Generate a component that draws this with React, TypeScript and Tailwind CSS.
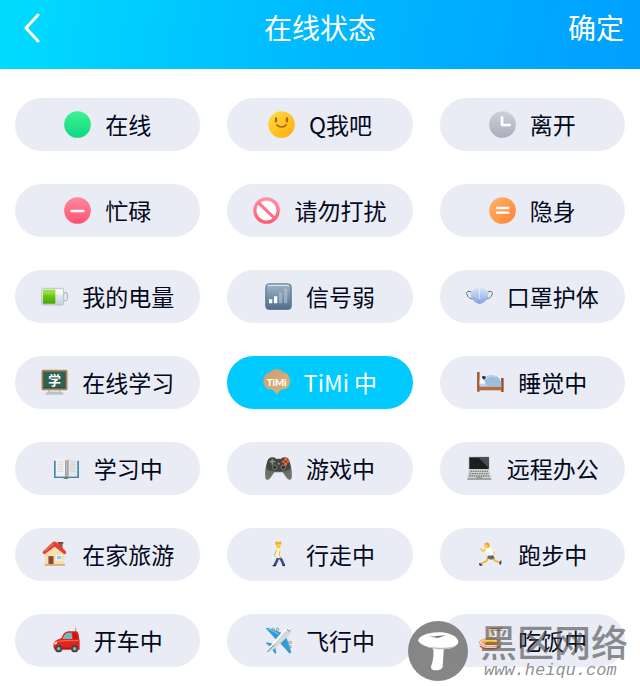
import { useState, type ReactNode } from 'react'
import { clsx } from 'clsx'

function Icon({ children }: { children: ReactNode }) {
  return (
    <svg viewBox="0 0 81 81" className="size-[27px] shrink-0" aria-hidden="true">
      {children}
    </svg>
  )
}

function Gradient({ id, from, to, diagonal }: { id: string; from: string; to: string; diagonal?: boolean }) {
  return (
    <linearGradient id={id} x1="0" y1="0" x2={diagonal ? '1' : '0'} y2="1">
      <stop offset="0" stopColor={from} />
      <stop offset="1" stopColor={to} />
    </linearGradient>
  )
}

function OnlineIcon() {
  return (
    <Icon>
      <Gradient id="online" from="#3df28f" to="#0fd782" />
      <circle cx="40.5" cy="40.5" r="40" fill="url(#online)" />
    </Icon>
  )
}

function SmileIcon() {
  return (
    <Icon>
      <Gradient id="smile" from="#ffdf42" to="#ffab0c" diagonal />
      <circle cx="40.5" cy="40.5" r="40" fill="url(#smile)" />
      <g fill="none" stroke="#a8641a" strokeWidth="5" strokeLinecap="round">
        <path d="M24 22v9M57 22v9" strokeWidth="7" />
        <path d="M27 42c6 8 21 8 27 0" />
      </g>
    </Icon>
  )
}

function AwayIcon() {
  return (
    <Icon>
      <Gradient id="away" from="#cfd0da" to="#abacba" />
      <circle cx="40.5" cy="40.5" r="40" fill="url(#away)" />
      <path d="M39 19v23h23" fill="none" stroke="#fff" strokeWidth="8" strokeLinecap="round" strokeLinejoin="round" />
    </Icon>
  )
}

function BusyIcon() {
  return (
    <Icon>
      <Gradient id="busy" from="#ff899d" to="#ff5372" />
      <circle cx="40.5" cy="40.5" r="40" fill="url(#busy)" />
      <path d="M23 42h35" stroke="#fff" strokeWidth="8" strokeLinecap="round" />
    </Icon>
  )
}

function DoNotDisturbIcon() {
  return (
    <Icon>
      <Gradient id="dnd" from="#ff8fa2" to="#ff5b78" />
      <circle cx="40.5" cy="40.5" r="35" fill="#fff" stroke="url(#dnd)" strokeWidth="10" />
      <path d="M16 17l49 47" stroke="#ff708a" strokeWidth="9" />
    </Icon>
  )
}

function InvisibleIcon() {
  return (
    <Icon>
      <Gradient id="invisible" from="#ffb469" to="#ff8136" diagonal />
      <circle cx="40.5" cy="40.5" r="40" fill="url(#invisible)" />
      <path d="M24 33h34M24 47h34" stroke="#fff" strokeWidth="7" strokeLinecap="round" />
    </Icon>
  )
}

function BatteryIcon() {
  return (
    <Icon>
      <Gradient id="battery" from="#8fe02c" to="#43a505" />
      <Gradient id="shell" from="#f7fafb" to="#c5d0d6" />
      <rect x="67" y="29" width="12" height="24" rx="4" fill="#e4eaed" stroke="#a7b1b8" strokeWidth="3" />
      <rect x="2" y="16" width="66" height="50" rx="5" fill="url(#shell)" stroke="#b9c4ca" strokeWidth="3" />
      <rect x="6" y="20" width="37" height="42" fill="url(#battery)" />
      <path d="M6 22h37v13H6z" fill="#b4ef68" opacity=".35" />
      <path d="M44 21h21v14H44z" fill="#fff" opacity=".6" />
    </Icon>
  )
}

function SignalIcon() {
  return (
    <Icon>
      <Gradient id="signal" from="#a3b9cb" to="#4a6b87" />
      <rect x="1" y="1" width="79" height="79" rx="11" fill="url(#signal)" />
      <rect x="3" y="3" width="75" height="75" rx="10" fill="none" stroke="#5a7790" strokeWidth="3" />
      <path d="M9 7h62" stroke="#d5e3ed" strokeWidth="4" strokeLinecap="round" />
      <path d="M12 49h10v12H12zM27 40h10v21H27z" fill="#fff" />
      <path d="M42 28h10v33H42zM57 17h10v44H57z" fill="#b6c8d6" opacity=".6" />
    </Icon>
  )
}

function MaskIcon() {
  return (
    <Icon>
      <Gradient id="mask" from="#e5effd" to="#7f9fdc" />
      <path d="M16 27C5 22 0 27 3 35c3 8 9 12 17 13M65 27c11-5 16 0 13 8-3 8-9 12-17 13" fill="none" stroke="#66686e" strokeWidth="3" />
      <path d="M40 8c3 0 25 16 27 22 1 7-2 17-6 21-4 5-13 12-20 12s-16-7-20-12c-4-4-8-14-7-21C15 24 37 8 40 8z" fill="url(#mask)" />
      <path d="M40 9v38" stroke="#f5f8ff" strokeWidth="2" />
      <path d="M15 32l25 16 25-16" fill="none" stroke="#dce8fb" strokeWidth="2" opacity=".5" />
    </Icon>
  )
}

function BlackboardIcon() {
  return (
    <Icon>
      <path d="M26 62l-4 8M54 62l4 8M15 75c0-7 51-7 51 0z" fill="none" stroke="#b9c0c6" strokeWidth="4" strokeLinejoin="round" />
      <rect x="4" y="5" width="73" height="56" rx="2" fill="#2e6353" stroke="#b58254" strokeWidth="5" />
      <path d="M7 56h67" stroke="#244e43" strokeWidth="3" />
      <text x="41" y="47" textAnchor="middle" fontSize="38" fontWeight="700" fill="#fff">
        学
      </text>
    </Icon>
  )
}

function TimiIcon() {
  return (
    <Icon>
      <Gradient id="timi" from="#c9a06c" to="#dcb27e" diagonal />
      <path d="M41 0c7 0 16 5 19 10 12 0 21 12 21 26 0 15-8 24-20 25-9 1-15 7-20 16-5-9-11-15-20-16C9 60 1 51 1 37c0-15 9-27 21-27C25 5 34 0 41 0z" fill="url(#timi)" />
      <text x="41" y="50" textAnchor="middle" fontSize="29" fontWeight="900" fill="#fff" className="font-['Lato','Noto_Sans_CJK_SC',sans-serif]">
        TiMi
      </text>
    </Icon>
  )
}

function BedIcon() {
  return (
    <Icon>
      <path d="M1 9h7v59H1zM72 27h8v42h-8z" fill="#a8623c" />
      <path d="M5 51h70v13H5z" fill="#b76b42" />
      <path d="M8 41h64v12H8z" fill="#bdd3e9" />
      <path d="M8 30c7-5 14-4 18 2l-3 12H8z" fill="#f5f8fb" />
      <path d="M16 22c6-3 13 0 12 7l-7 3c-5-1-7-6-5-10z" fill="#333638" />
      <path d="M22 36c0-20 33-22 44-8l7 13v12H31c-2-6-5-10-9-17z" fill="#9dbddd" />
      <path d="M26 31c8-11 21-13 31-5" fill="none" stroke="#c8dff2" strokeWidth="3" />
      <path d="M2 10v57M77 28v40" stroke="#824326" strokeWidth="2" />
    </Icon>
  )
}

function BookIcon() {
  return (
    <Icon>
      <path d="M3 17h9v46h57V17h9v52H48l-5 3h-8l-5-3H3z" fill="#3d86ad" />
      <path d="M7 64h28l5 4 5-4h28" fill="none" stroke="#d1d2d2" strokeWidth="3" />
      <path d="M8 13c13-5 25-3 32 3v50c-7-6-19-6-32-3z" fill="#f2f2f2" />
      <path d="M73 13c-13-5-25-3-32 3v50c7-6 19-6 32-3z" fill="#e6e6e6" />
      <path d="M36 14l4 3v49l-4-3zM41 17l6-4v48l-6 5z" fill="#a2a2a2" />
      <path d="M14 21h17M14 28h18M14 35h17M14 42h18M14 49h17M51 21h16M51 28h17M51 35h16M51 42h17M51 49h16" stroke="#c6c6c6" strokeWidth="2" />
      <path d="M37 64h7v8h-7z" fill="#77804c" />
    </Icon>
  )
}

function GamepadIcon() {
  return (
    <Icon>
      <Gradient id="pad" from="#53554f" to="#777a71" />
      <path d="M11 11c7-6 18-5 22 0h15c5-6 16-5 22 0 8 13 12 40 10 57-2 9-10 8-15 1L53 52H28L16 69c-5 7-13 8-15-1C-1 50 3 24 11 11z" fill="url(#pad)" />
      <path d="M10 13c7-6 17-5 22 0h17c5-5 14-6 20 0 5 7 7 18 7 27-7 8-18 8-24 9H29C21 49 11 47 4 40c1-9 2-20 6-27z" fill="#41443f" />
      <path d="M22 12v17M14 20h17" stroke="#8b8f87" strokeWidth="5" />
      <g fill="#f16334">
        <circle cx="62" cy="13" r="5" />
        <circle cx="55" cy="20" r="4" />
        <circle cx="69" cy="20" r="4" />
        <circle cx="62" cy="27" r="5" />
      </g>
      <g fill="#30332f" stroke="#7d827a" strokeWidth="3">
        <circle cx="29" cy="37" r="7" />
        <circle cx="55" cy="37" r="7" />
      </g>
      <circle cx="41" cy="26" r="3" fill="#9b9e96" />
    </Icon>
  )
}

function LaptopIcon() {
  return (
    <Icon>
      <path d="M8 5h62v39H8z" fill="#b9babb" />
      <path d="M10 7h58v35H10z" fill="#1d1e20" />
      <path d="M36 7h32v32z" fill="#4a4c50" />
      <path d="M8 44h62l6 26H4z" fill="#d0d1d2" />
      <path d="M4 69h72v6H4z" fill="#a2a4a6" />
      <g stroke="#808285" strokeWidth="4" strokeDasharray="5 2">
        <path d="M13 49h53M11 56h57M9 63h60" />
      </g>
      <path d="M31 66h17v4H31z" fill="#999b9d" />
    </Icon>
  )
}

function HouseIcon() {
  return (
    <Icon>
      <path d="M52 4h13v31H52z" fill="#9a6046" />
      <path d="M50 3h17v5H50z" fill="#744634" />
      <path d="M12 37l30-25 28 25v36H12z" fill="#f4e1ae" />
      <path d="M22 45h16v28H22z" fill="#a15c42" />
      <path d="M26 48h8v21h-8z" fill="#814531" />
      <path d="M46 43h17v15H46z" fill="#fff" />
      <path d="M48 45h13v10H48z" fill="#90c9f2" />
      <path d="M11 69h29v5H11zM40 69h32v5H40z" fill="#d7ae78" />
      <path d="M6 37c-2-3-1-5 2-8L35 4c3-3 8-3 11 0l27 25c4 4 3 8 0 10-3 1-5 0-8-3L41 17 15 37c-4 3-7 4-9 0z" fill="#e44139" />
      <path d="M12 30L37 8" stroke="#ff8a73" strokeWidth="3" />
    </Icon>
  )
}

function WalkIcon() {
  return (
    <Icon>
      <path d="M40 48l-5 13-6 12M43 48l7 10 6 14" fill="none" stroke="#404d91" strokeWidth="8" strokeLinejoin="round" />
      <path d="M23 72h10v4H23zM52 73l8-4v6h-8z" fill="#20253f" />
      <path d="M36 22c7-3 11 0 12 7l1 21-15 2z" fill="#f7f5e5" />
      <path d="M35 27l-7 15 3 4M45 29l-2 15 5 4" fill="none" stroke="#efb52d" strokeWidth="3" strokeLinecap="round" strokeLinejoin="round" />
      <path d="M32 6l15-1v12l-4 6-9-3z" fill="#ffcb35" />
      <path d="M30 5l5-4 5 2 8-2 2 8H38l-3 5z" fill="#eeb02a" />
    </Icon>
  )
}

function RunIcon() {
  return (
    <Icon>
      <path d="M36 48L27 61l-15 7M45 48l8 10 15 7" fill="none" stroke="#f7b92e" strokeWidth="6" strokeLinecap="round" strokeLinejoin="round" />
      <path d="M29 25L17 31l-5-7M44 27l8 11" fill="none" stroke="#ffc43c" strokeWidth="5" strokeLinecap="round" strokeLinejoin="round" />
      <path d="M25 24l14-5 10 9v19l-16 1z" fill="#fcfcfd" />
      <path d="M32 44l17-1 4 9-10 4-12-4z" fill="#646968" />
      <circle cx="29" cy="14" r="8" fill="#ffd04a" />
      <path d="M22 10c1-6 11-8 15-2 3 5 0 11-4 12l-2-9z" fill="#eca725" />
      <path d="M7 66l7 3 3 4-7 2-4-4zM67 63l6-6v12l-5 3z" fill="#29417b" />
    </Icon>
  )
}

function CarIcon() {
  return (
    <Icon>
      <path d="M68 14V2" stroke="#777" strokeWidth="2" />
      <path d="M2 62c-3-16 3-22 24-29 5-14 10-20 25-20h19c7 1 8 15 10 30v25H5z" fill="#e5211c" />
      <path d="M29 36c4-14 9-19 22-19h5l2 19z" fill="#70b9c9" />
      <path d="M60 17h8c4 3 5 11 6 19H61z" fill="#c11814" />
      <path d="M5 46c17-6 43-5 71-5" fill="none" stroke="#ff7a59" strokeWidth="3" />
      <path d="M24 64h30" stroke="#a31717" strokeWidth="4" />
      <path d="M4 47l8-3v6l-8 3z" fill="#fff0c0" />
      <g fill="#aaa" stroke="#444749" strokeWidth="6">
        <circle cx="17" cy="65" r="8" />
        <circle cx="65" cy="65" r="8" />
      </g>
    </Icon>
  )
}

function PlaneIcon() {
  return (
    <Icon>
      <g fill="#c9cfd1" stroke="#899296" strokeWidth="2">
        <rect x="21" y="3" width="7" height="10" rx="3" />
        <rect x="34" y="3" width="7" height="10" rx="3" />
        <rect x="70" y="43" width="10" height="7" rx="3" />
        <rect x="69" y="56" width="10" height="7" rx="3" />
      </g>
      <path d="M2 4l7-2 42 16-16 22zM64 30l15 46-5 4-29-32z" fill="#359bd2" />
      <path d="M8 5l33 16" stroke="#85cbec" strokeWidth="3" />
      <path d="M2 48l4-2 21 5-7 12zM31 60l3 18-4 3-11-17z" fill="#389fd3" />
      <path d="M79 2c3 8-3 19-11 27L29 65 12 75l-5 1 8-17L51 15C59 5 71-1 79 2z" fill="#d3d9d9" />
      <path d="M77 4C65 4 59 9 52 18L16 61" fill="none" stroke="#fff" strokeWidth="5" />
      <path d="M66 6l8 8M7 75l21-22" fill="none" stroke="#7b8588" strokeWidth="3" />
    </Icon>
  )
}

function MealIcon() {
  return (
    <Icon>
      <path d="M39 5l38-2M39 9l38 1" stroke="#a96e3a" strokeWidth="3" />
      <path d="M39 5v34M44 5v34" stroke="#f3c349" strokeWidth="3" />
      <path d="M7 49c0 17 14 25 33 25s34-8 34-25z" fill="#f0e3d6" />
      <path d="M9 57c12 11 51 11 63 0" fill="none" stroke="#d44d39" strokeWidth="4" />
      <ellipse cx="40.5" cy="47" rx="34" ry="13" fill="#f0d3b8" stroke="#dd8468" strokeWidth="2" />
      <ellipse cx="40.5" cy="46" rx="26" ry="8" fill="#eda43a" />
      <path d="M22 46c8-9 32-9 37-1" fill="none" stroke="#ffd25c" strokeWidth="4" />
    </Icon>
  )
}

const statuses = [
  { label: '在线', icon: <OnlineIcon /> },
  { label: 'Q我吧', icon: <SmileIcon /> },
  { label: '离开', icon: <AwayIcon /> },
  { label: '忙碌', icon: <BusyIcon /> },
  { label: '请勿打扰', icon: <DoNotDisturbIcon /> },
  { label: '隐身', icon: <InvisibleIcon /> },
  { label: '我的电量', icon: <BatteryIcon /> },
  { label: '信号弱', icon: <SignalIcon /> },
  { label: '口罩护体', icon: <MaskIcon /> },
  { label: '在线学习', icon: <BlackboardIcon /> },
  { label: 'TiMi 中', icon: <TimiIcon /> },
  { label: '睡觉中', icon: <BedIcon /> },
  { label: '学习中', icon: <BookIcon /> },
  { label: '游戏中', icon: <GamepadIcon /> },
  { label: '远程办公', icon: <LaptopIcon /> },
  { label: '在家旅游', icon: <HouseIcon /> },
  { label: '行走中', icon: <WalkIcon /> },
  { label: '跑步中', icon: <RunIcon /> },
  { label: '开车中', icon: <CarIcon /> },
  { label: '飞行中', icon: <PlaneIcon /> },
  { label: '吃饭中', icon: <MealIcon /> },
]

function Header() {
  return (
    <header className="grid grid-cols-3 items-center bg-linear-100 from-[#00dcff] via-[#00b8ff] to-[#009fff] px-4 pt-[3px] pb-[17px] text-[28px] leading-[49px] text-white">
      <button type="button" aria-label="返回" className="justify-self-start">
        <svg viewBox="0 0 24 32" className="h-8 w-6" fill="none" stroke="currentColor" strokeWidth="3" strokeLinecap="round" strokeLinejoin="round">
          <path d="M22 3L10 16l12 13" />
        </svg>
      </button>
      <h1 className="text-center">在线状态</h1>
      <button type="button" className="justify-self-end">
        确定
      </button>
    </header>
  )
}

function Watermark() {
  return (
    <div className="pointer-events-none absolute right-3 bottom-[5px] flex items-center gap-3 text-[#505050]/65">
      <svg viewBox="0 0 180 180" className="size-[60px]" aria-hidden="true">
        <circle cx="90" cy="90" r="90" fill="#808080" fillOpacity=".95" />
        <path d="M75 76h34c-4 23-3 42-5 61-2 14-37 15-35 0 8-20 9-40 6-61z" fill="#fff" />
        <path d="M31 56c4-15 43-25 72-22 26 3 46 14 48 27 1 14-22 24-50 24-34 0-65-14-70-25-1-1-1-3 0-4z" fill="#fff" />
        <path d="M36 66c17 13 40 14 66 14 22 0 40-3 46-9-8 9-26 14-47 14-27 0-51-9-65-19z" fill="#bbb" />
        <path d="M61 46c18 2 36-3 53-3l-24 8z" fill="#777" />
      </svg>
      <div>
        <p className="text-[37px] leading-10 font-medium">黑区网络</p>
        <p className="pl-1 font-['Liberation_Mono',monospace] text-[17px] leading-5 italic">www.heiqu.com</p>
      </div>
    </div>
  )
}

export default function App() {
  const [selected, setSelected] = useState('TiMi 中')

  return (
    <div className="relative min-h-screen bg-white font-['Noto_Sans_CJK_SC',sans-serif]">
      <Header />
      <main className="grid grid-cols-3 gap-x-[27px] gap-y-[33px] px-[15px] pt-[29px] pb-[17px]">
        {statuses.map(({ label, icon }) => (
          <button
            key={label}
            type="button"
            aria-pressed={selected === label}
            onClick={() => setSelected(label)}
            className={clsx(
              'flex h-[53px] items-center justify-center gap-[14px] rounded-full text-[23px] whitespace-nowrap',
              selected === label ? 'bg-[#00caff] text-white' : 'bg-[#e9ecf5] text-[#03081a]',
            )}
          >
            {icon}
            {label}
          </button>
        ))}
      </main>
      <Watermark />
    </div>
  )
}
